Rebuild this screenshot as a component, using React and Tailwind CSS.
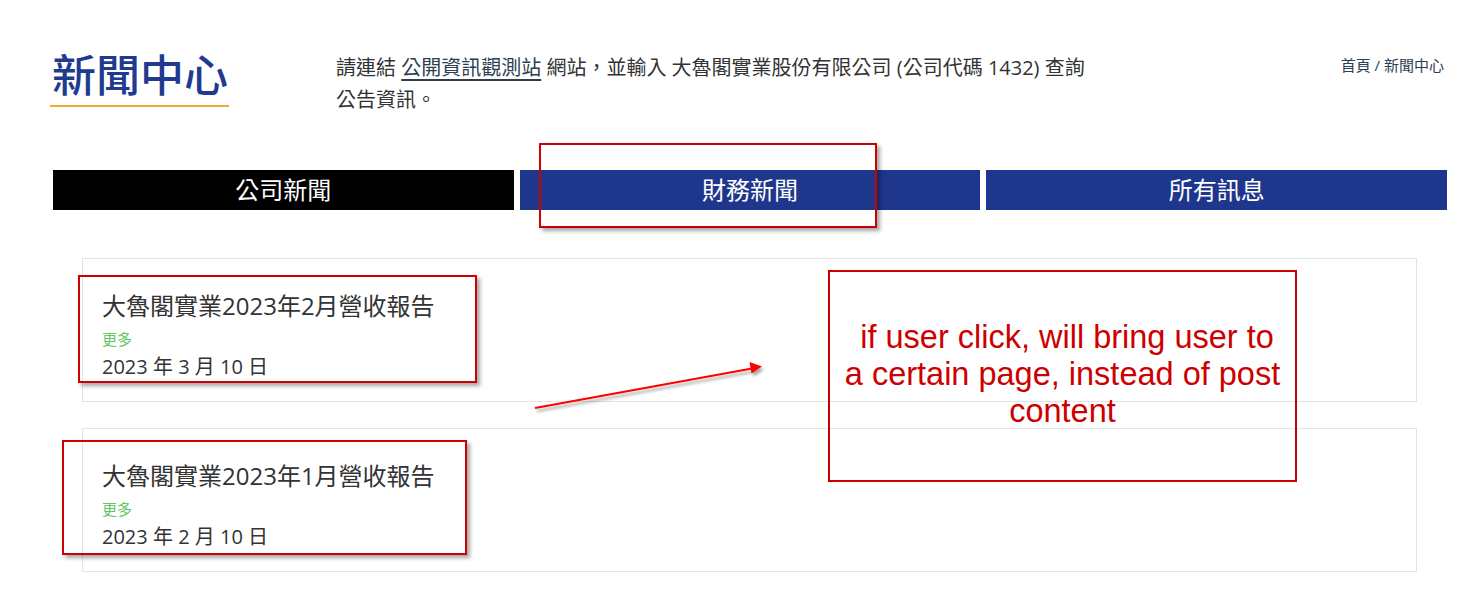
import React from "react";

const cjk = "font-['Open_Sans','Noto_Sans_CJK_TC',sans-serif]";

function Card({ title, date }) {
  return (
    <div className="h-[144px] border border-[#e4e4e4] bg-white pl-[19px] pt-[31px]">
      <div className="text-[24px] leading-[32px] text-[#333333]">{title}</div>
      <div className="mt-[7px] text-[15px] leading-[20px] text-[#62c862]">更多</div>
      <div className="mt-[5px] text-[20px] leading-[26px] text-[#333333]">{date}</div>
    </div>
  );
}

export default function App() {
  return (
    <div className={`relative w-[1483px] h-[615px] overflow-hidden bg-white ${cjk}`}>
      <div className="pt-[49px]">
        <div className="flex items-start pl-[50px] pr-[39px]">
          <div className="w-[179px] border-b-2 border-[#f5a83a] pb-[4px]">
            <div className="pl-[2px] text-[44px] leading-[52px] font-medium text-[#1f3a8f]">新聞中心</div>
          </div>
          <div className="ml-[107px] mt-[3px] w-[760px] text-[20px] leading-[32px] text-[#333333]">
            請連結 <span className="underline underline-offset-[4px] decoration-[#2c3e50] text-[#2c3e50]">公開資訊觀測站</span> 網站，並輸入 大魯閣實業股份有限公司 (公司代碼 1432) 查詢
            <br />
            公告資訊。
          </div>
          <div className="ml-auto mt-[6px] text-[15px] leading-[20px] text-[#2c3e50]">首頁 / 新聞中心</div>
        </div>

        <div className="mt-[54px] ml-[53px] w-[1394px] grid grid-cols-3 gap-[6px]">
          <div className="h-[40px] bg-black text-white text-[24px] leading-[40px] text-center">公司新聞</div>
          <div className="h-[40px] bg-[#1e378d] text-white text-[24px] leading-[40px] text-center">財務新聞</div>
          <div className="h-[40px] bg-[#1e378d] text-white text-[24px] leading-[40px] text-center">所有訊息</div>
        </div>

        <div className="mt-[48px] ml-[82px] w-[1335px] flex flex-col gap-[26px]">
          <Card title="大魯閣實業2023年2月營收報告" date="2023 年 3 月 10 日" />
          <Card title="大魯閣實業2023年1月營收報告" date="2023 年 2 月 10 日" />
        </div>
      </div>

      {/* annotation overlays */}
      <div className="absolute left-[539px] top-[143px] w-[338px] h-[85px] border-2 border-[#cc0000] shadow-[3px_3px_4px_rgba(0,0,0,0.35)]" />
      <div className="absolute left-[78px] top-[275px] w-[399px] h-[108px] border-2 border-[#cc0000] shadow-[3px_3px_4px_rgba(0,0,0,0.35)]" />
      <div className="absolute left-[62px] top-[440px] w-[405px] h-[115px] border-2 border-[#cc0000] shadow-[3px_3px_4px_rgba(0,0,0,0.35)]" />
      <div className="absolute left-[828px] top-[270px] w-[469px] h-[212px] border-2 border-[#cc0000] bg-transparent flex items-center justify-center">
        <div className="font-['Liberation_Sans',Arial,sans-serif] text-[32.5px] leading-[37px] text-[#cc0000] text-center -mt-[3px] whitespace-nowrap">
          &nbsp;if user click, will bring user to<br />a certain page, instead of post<br />content
        </div>
      </div>
      <svg className="absolute left-0 top-0" width="1483" height="615" viewBox="0 0 1483 615">
        <defs>
          <filter id="sh" x="-10%" y="-50%" width="120%" height="200%">
            <feDropShadow dx="2" dy="3" stdDeviation="1.5" floodColor="#000" floodOpacity="0.35" />
          </filter>
        </defs>
        <g filter="url(#sh)">
          <line x1="535" y1="408" x2="752" y2="368.5" stroke="#ff0000" strokeWidth="2" />
          <polygon points="762,366.5 749.5,362 751.5,373.5" fill="#ff0000" />
        </g>
      </svg>
    </div>
  );
}
